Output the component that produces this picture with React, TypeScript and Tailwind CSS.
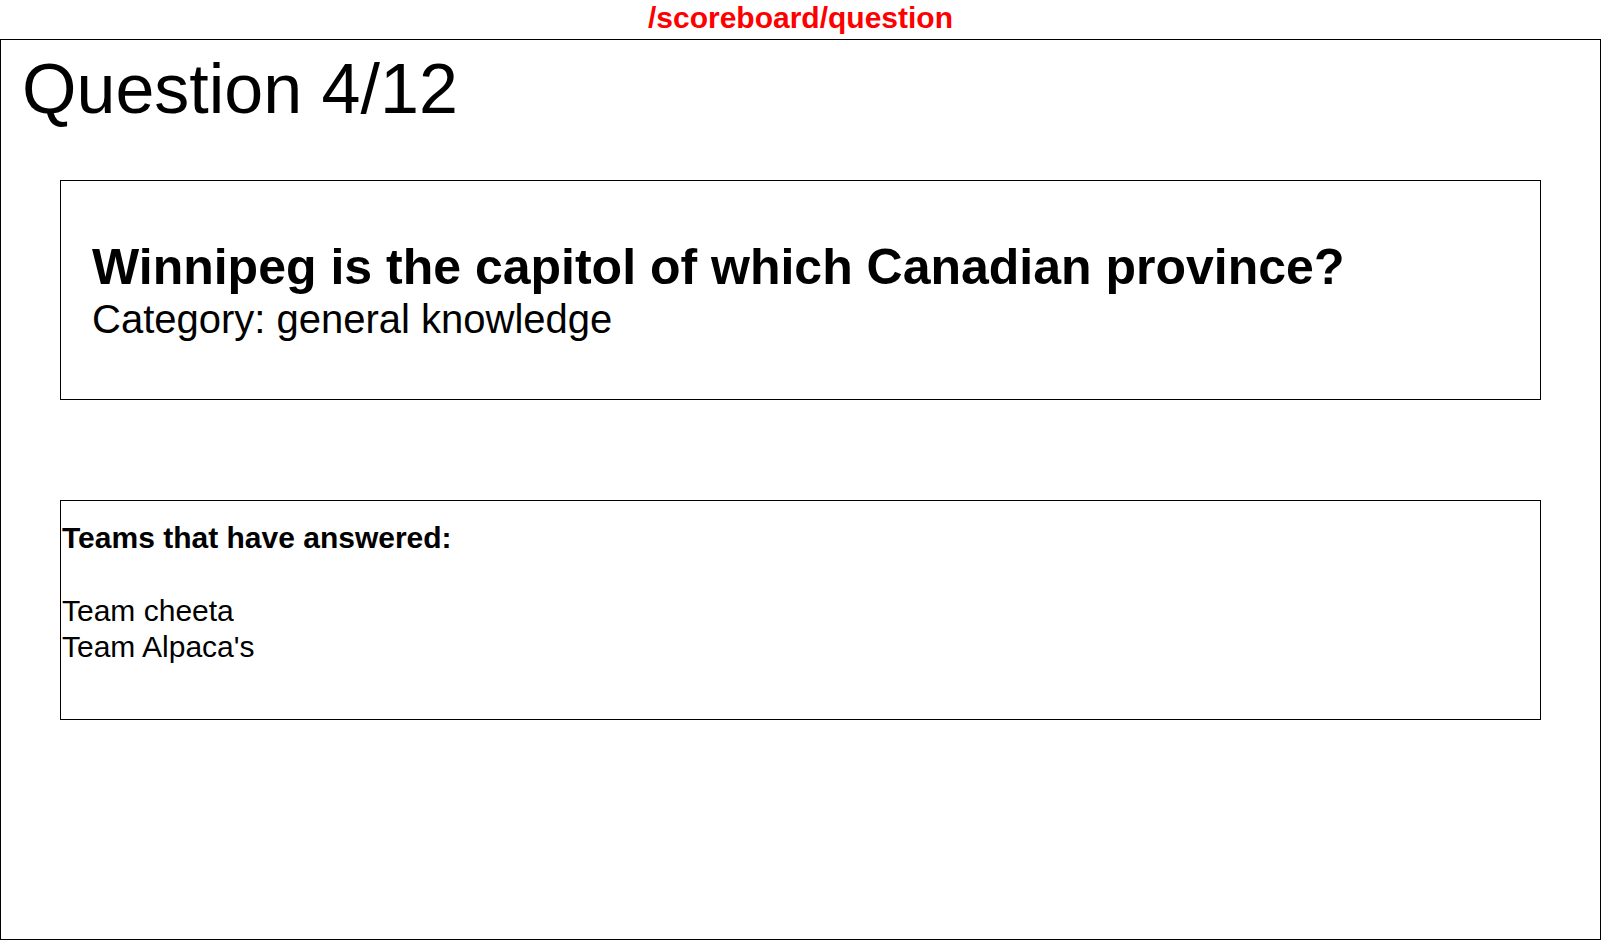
export default function App() {
  const answered = ['Team cheeta', "Team Alpaca's"]

  return (
    <div className="h-[940px] bg-white text-black font-['Liberation_Sans',Arial,sans-serif]">
      {/* Route label */}
      <div className="h-[39px] text-center text-[30px] leading-[36px] font-bold text-[#ff0000]">
        /scoreboard/question
      </div>

      {/* Scoreboard frame */}
      <div className="h-[901px] border border-black">
        <h1 className="pt-[9px] pl-[21px] text-[70px] leading-[80px] font-normal">Question 4/12</h1>

        <div className="mx-[59px] mt-[51px] h-[220px] border border-black px-[31px] flex flex-col justify-center">
          <h2 className="text-[50px] leading-[57px] font-bold">
            Winnipeg is the capitol of which Canadian province?
          </h2>
          <p className="text-[40px] leading-[46px]">Category: general knowledge</p>
        </div>

        <div className="mx-[59px] mt-[100px] h-[220px] border border-black px-px pt-[19px]">
          <h3 className="text-[30px] leading-[35px] font-bold">Teams that have answered:</h3>
          <ul className="mt-[38px]">
            {answered.map((team) => (
              <li key={team} className="text-[30px] leading-[36px]">
                {team}
              </li>
            ))}
          </ul>
        </div>
      </div>
    </div>
  )
}
